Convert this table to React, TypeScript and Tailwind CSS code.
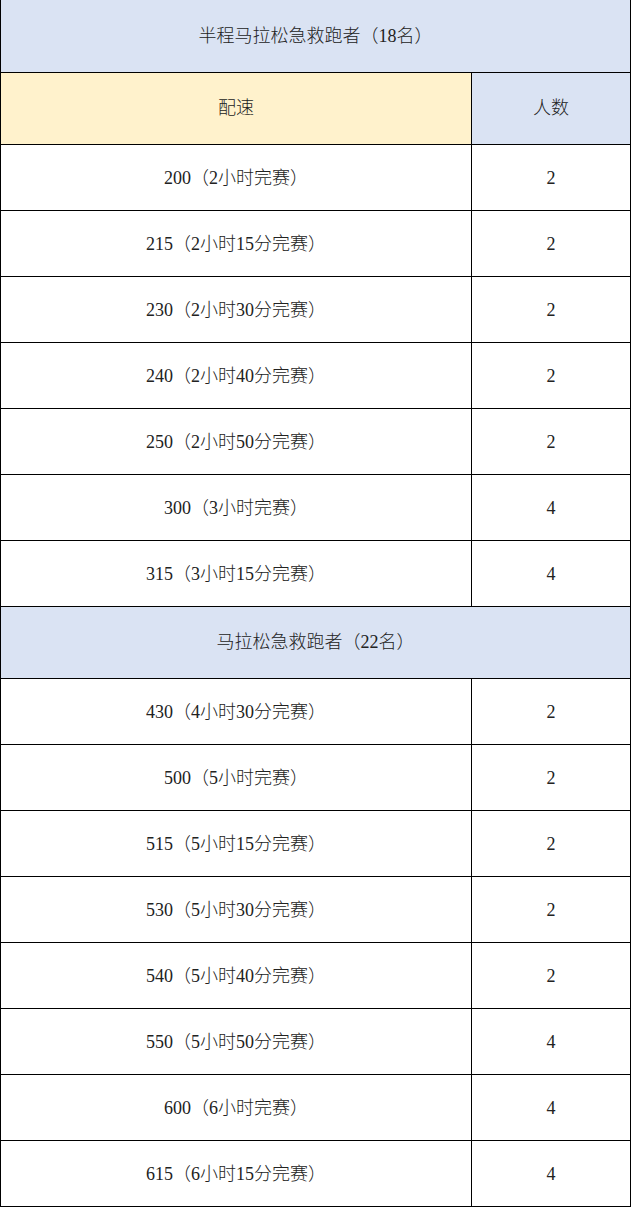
import React from "react";

const half = [
  ["200（2小时完赛）", "2"],
  ["215（2小时15分完赛）", "2"],
  ["230（2小时30分完赛）", "2"],
  ["240（2小时40分完赛）", "2"],
  ["250（2小时50分完赛）", "2"],
  ["300（3小时完赛）", "4"],
  ["315（3小时15分完赛）", "4"],
];

const full = [
  ["430（4小时30分完赛）", "2"],
  ["500（5小时完赛）", "2"],
  ["515（5小时15分完赛）", "2"],
  ["530（5小时30分完赛）", "2"],
  ["540（5小时40分完赛）", "2"],
  ["550（5小时50分完赛）", "4"],
  ["600（6小时完赛）", "4"],
  ["615（6小时15分完赛）", "4"],
];

const Row = ({ pace, count }: { pace: string; count: string }) => (
  <div className="grid grid-cols-[471px_1fr] h-[66px] border-b border-black">
    <div className="flex items-center justify-center border-r border-black pt-[2px]">{pace}</div>
    <div className="flex items-center justify-center pt-[2px]">{count}</div>
  </div>
);

const Title = ({ text, first }: { text: string; first?: boolean }) => (
  <div
    className={`${first ? "h-[73px]" : "h-[72px]"} flex items-center justify-center border-b border-black bg-[#dae3f3]`}
  >
    {text}
  </div>
);

export default function App() {
  return (
    <div className="bg-white w-[632px] min-h-[1208px]">
      <div
        className="w-[631px] border-l border-r border-black text-[18px] text-[#222] font-light"
        style={{ fontFamily: '"Liberation Serif", "Noto Sans CJK SC", serif' }}
      >
        <Title text="半程马拉松急救跑者（18名）" first />
        <div className="grid grid-cols-[471px_1fr] h-[72px] border-b border-black">
          <div className="flex items-center justify-center border-r border-black bg-[#fff2cc]">配速</div>
          <div className="flex items-center justify-center bg-[#dae3f3]">人数</div>
        </div>
        {half.map(([p, c]) => (
          <Row key={p} pace={p} count={c} />
        ))}
        <Title text="马拉松急救跑者（22名）" />
        {full.map(([p, c]) => (
          <Row key={p} pace={p} count={c} />
        ))}
      </div>
    </div>
  );
}
